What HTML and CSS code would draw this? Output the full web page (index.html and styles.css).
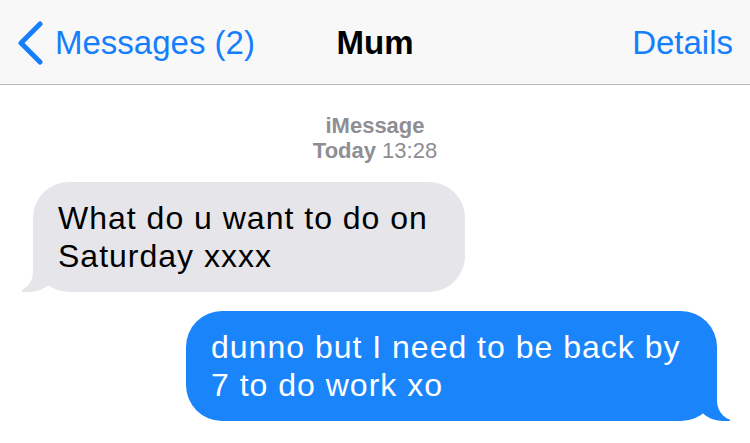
FILE: index.html
```html
<!DOCTYPE html>
<html lang="en">

<head>
    <meta charset="UTF-8">
    <meta name="viewport" content="width=device-width, initial-scale=1.0">
    <title>Mum</title>
    <link rel="stylesheet" href="styles.css">
</head>

<body>
    <!-- Navigation Bar -->
    <div class="navbar">
        <a class="nav-back" href="#">
            <svg class="chevron" width="26" height="44" viewBox="0 0 26 44">
                <polyline points="23,3 4,22 23,41" fill="none" stroke="#157efb" stroke-width="5" stroke-linecap="round" stroke-linejoin="round"/>
            </svg>
            <span>Messages (2)</span>
        </a>
        <div class="nav-title">Mum</div>
        <a class="nav-details" href="#">Details</a>
    </div>

    <!-- Conversation -->
    <div class="conversation">
        <div class="timestamp">
            <div class="service">iMessage</div>
            <div><b>Today</b> 13:28</div>
        </div>

        <div class="bubble received">What do u want to do on<br>Saturday xxxx</div>
        <div class="bubble sent">dunno but I need to be back by<br>7 to do work xo</div>
    </div>
</body>

</html>
```

FILE: styles.css
```css
body {
    margin: 0;
    background: #fff;
    font-family: "Liberation Sans", Arial, sans-serif;
}

.navbar {
    display: grid;
    grid-template-columns: 1fr auto 1fr;
    align-items: center;
    height: 84px;
    padding: 0 17px;
    background: #f8f8f8;
    border-bottom: 1px solid #b8b8b8;
    font-size: 33px;
    line-height: 40px;
}

.navbar a {
    color: #157efb;
    text-decoration: none;
}

.nav-back {
    display: flex;
    align-items: center;
    gap: 12px;
    margin-top: 2px;
}

.chevron {
    display: block;
    margin-top: -1px;
}

.nav-title {
    font-weight: bold;
    color: #000;
    margin-top: 2px;
}

.nav-details {
    justify-self: end;
    margin-top: 2px;
}

.conversation {
    display: flex;
    flex-direction: column;
    padding: 28px 33px 0 33px;
}

.timestamp {
    text-align: center;
    color: #8e8e93;
    font-size: 22px;
    line-height: 25px;
    margin-bottom: 19px;
}

.service {
    font-weight: bold;
}

.bubble {
    position: relative;
    box-sizing: border-box;
    height: 110px;
    padding: 17px 25px;
    border-radius: 36px;
    font-size: 32px;
    line-height: 38px;
    letter-spacing: 1px;
    white-space: nowrap;
}

.bubble::before,
.bubble::after {
    content: "";
    position: absolute;
    bottom: 0;
    height: 36px;
}

.received {
    align-self: flex-start;
    width: 432px;
    background: #e5e5ea;
    color: #000;
    margin-bottom: 19px;
}

.received::before {
    left: -11px;
    width: 36px;
    background: #e5e5ea;
    border-bottom-right-radius: 28px;
}

.received::after {
    left: -20px;
    width: 20px;
    background: #fff;
    border-bottom-right-radius: 20px;
}

.sent {
    align-self: flex-end;
    width: 531px;
    margin-right: 0;
    background: #1a85fb;
    color: #fff;
}

.sent::before {
    right: -13px;
    width: 36px;
    background: #1a85fb;
    border-bottom-left-radius: 28px;
}

.sent::after {
    right: -22px;
    width: 22px;
    background: #fff;
    border-bottom-left-radius: 20px;
}
```
